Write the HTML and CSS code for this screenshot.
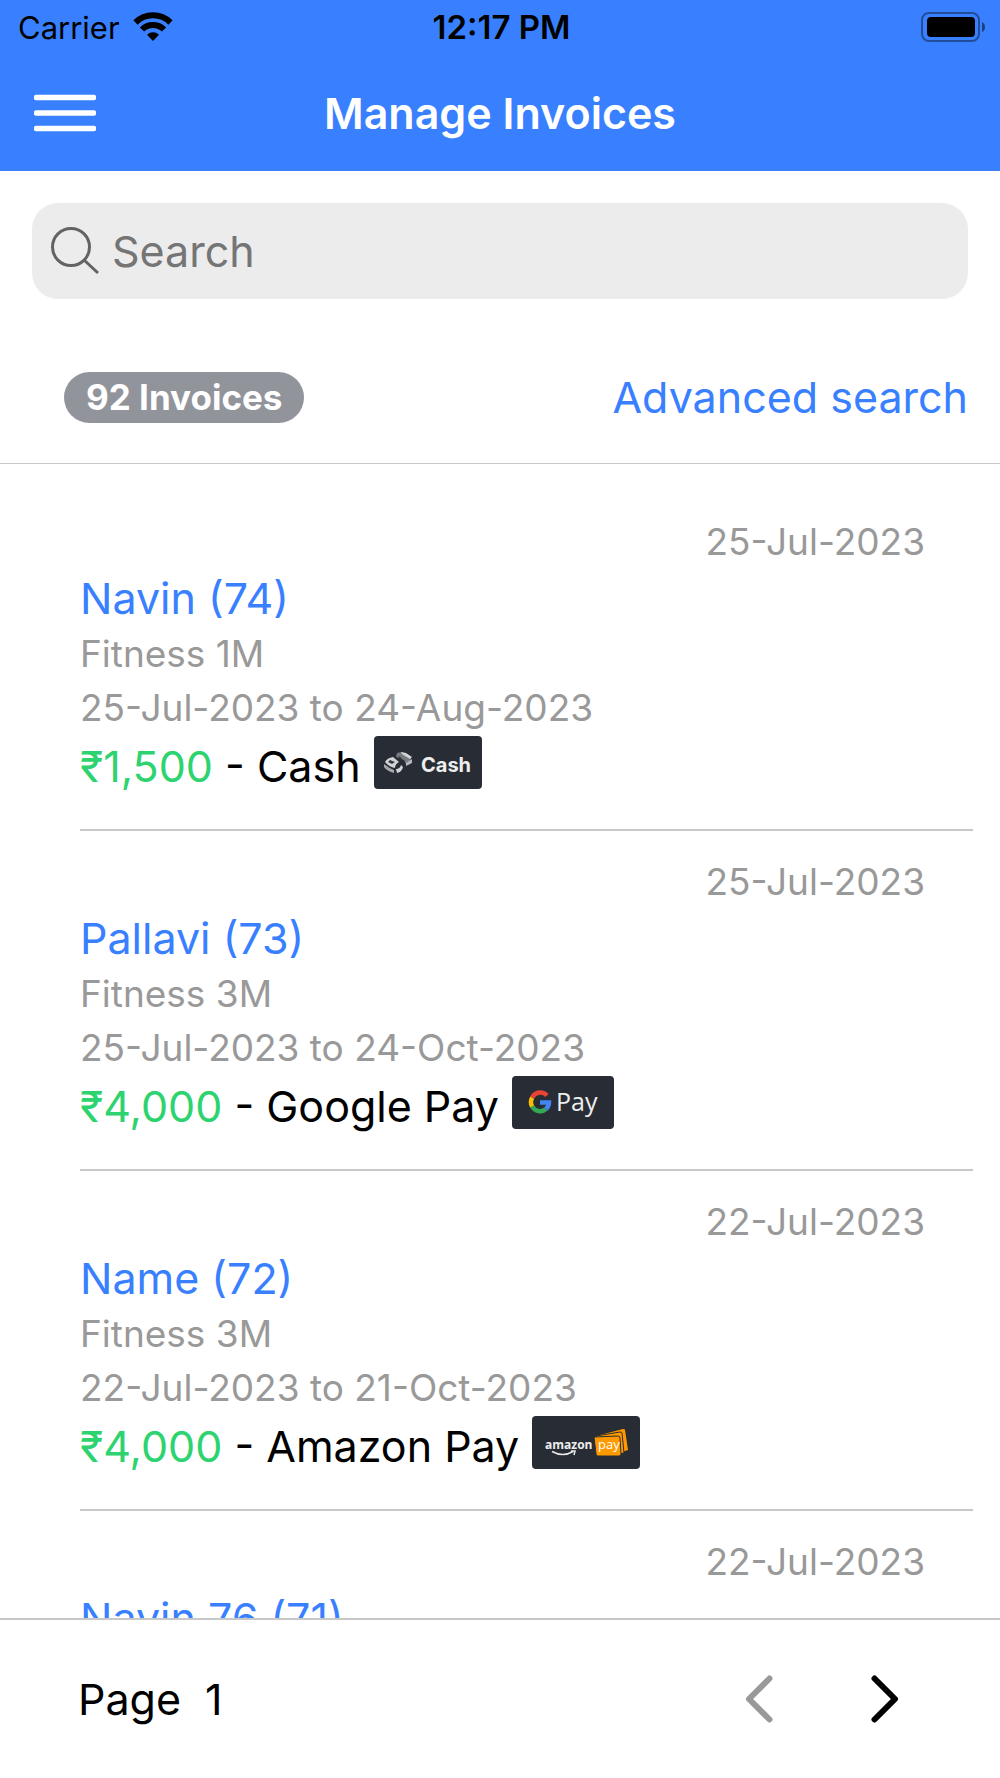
FILE: index.html
```html
<!DOCTYPE html>
<html lang="en">
<head>
<meta charset="utf-8">
<meta name="viewport" content="width=device-width, initial-scale=1">
<title>Manage Invoices</title>
<link rel="stylesheet" href="styles.css">
</head>
<body>
<header class="header">
  <div class="status">
    <div class="status-carrier">
      <span>Carrier</span>
      <svg width="40" height="30" viewBox="0 0 40 30" aria-hidden="true">
        <g fill="none" stroke="#000" stroke-width="6">
          <path d="M2.5 10.5A25 25 0 0 1 37.5 10.5"/>
          <path d="M9 17.5A15.5 15.5 0 0 1 31 17.5"/>
        </g>
        <path d="M20 29l-6-6.200A8.500 8.500 0 0 1 26 22.800z" fill="#000"/>
      </svg>
    </div>
    <span class="status-time">12:17 PM</span>
    <svg class="status-battery" width="64" height="30" viewBox="0 0 64 30" aria-hidden="true">
      <rect x="1" y="1" width="57" height="28" rx="7" fill="none" stroke="#000" stroke-opacity=".4" stroke-width="2"/>
      <rect x="6" y="5" width="48" height="20" rx="4"/>
      <path d="M61 10q3 1.500 3 5t-3 5z" fill-opacity=".5"/>
    </svg>
  </div>
  <nav class="toolbar">
    <button class="icon-button" type="button" aria-label="Menu">
      <svg width="62" height="38" viewBox="0 0 62 38" aria-hidden="true">
        <path d="M2.500 3.500h57M2.500 19h57M2.500 34.500h57" fill="none" stroke="#fff" stroke-width="5.500" stroke-linecap="round"/>
      </svg>
    </button>
    <h1 class="title">Manage Invoices</h1>
  </nav>
</header>

<section class="filters">
  <label class="search">
    <svg width="48" height="48" viewBox="0 0 48 48" aria-hidden="true">
      <g fill="none" stroke="#636363" stroke-width="3">
        <circle cx="20" cy="20" r="18.500"/>
        <path d="M33 33L47 46"/>
      </g>
    </svg>
    <input class="search-input" type="search" placeholder="Search" aria-label="Search">
  </label>
  <div class="summary">
    <span class="chip">92 Invoices</span>
    <a class="link" href="#advanced">Advanced search</a>
  </div>
</section>

<main class="list">
  <article class="invoice">
    <time class="date">25-Jul-2023</time>
    <a class="name" href="#74">Navin (74)</a>
    <p class="detail">Fitness 1M</p>
    <p class="detail">25-Jul-2023 to 24-Aug-2023</p>
    <p class="payment"><span><span class="amount">₹1,500</span> - Cash</span>
      <svg class="badge" width="108" height="53" viewBox="0 0 108 53" aria-hidden="true">
        <rect width="108" height="53" rx="4" fill="#282d35"/>
        <g fill="#d4d5d7">
          <path d="M11 26q2-4 8-5l6 5q-4 2-4 6-6-1-10-6z"/>
          <path d="M10 28q5 4 10 6v3q-7-2-10-6z" fill="#a5a7aa"/>
          <path d="M22 33q4 0 5-4l2 2q-1 5-6 6z"/>
          <path d="M23 17l5-1 9 6-1 3-4 3-2-4-8-3z" fill="#777b80"/>
          <path d="M27 16l5 1 6 4-2 2-8-5z"/>
          <path d="M32 27l6-4v4l-6 3z" fill="#b5b7ba"/>
          <path d="M16 24l5 2-3 2-4-2zM24 20l4 2-2 2z" fill="#33383f"/>
        </g>
        <text x="47" y="36" class="badge-cash">Cash</text>
      </svg>
    </p>
  </article>
  <article class="invoice">
    <time class="date">25-Jul-2023</time>
    <a class="name" href="#73">Pallavi (73)</a>
    <p class="detail">Fitness 3M</p>
    <p class="detail">25-Jul-2023 to 24-Oct-2023</p>
    <p class="payment"><span><span class="amount">₹4,000</span> - Google Pay</span>
      <svg class="badge" width="102" height="53" viewBox="0 0 102 53" aria-hidden="true">
        <rect width="102" height="53" rx="4" fill="#282d35"/>
        <g fill="none" stroke-width="4.500">
          <path d="M35 19.500A9 9 0 0 0 20.200 21.500" stroke="#ea4335"/>
          <path d="M20.200 21.500A9 9 0 0 0 20.200 30.500" stroke="#fbbc04"/>
          <path d="M20.200 30.500A9 9 0 0 0 34 33" stroke="#34a853"/>
          <path d="M34 33A9 9 0 0 0 37 26.500H28" stroke="#4285f4"/>
        </g>
        <text x="44" y="35" class="badge-gpay">Pay</text>
      </svg>
    </p>
  </article>
  <article class="invoice">
    <time class="date">22-Jul-2023</time>
    <a class="name" href="#72">Name (72)</a>
    <p class="detail">Fitness 3M</p>
    <p class="detail">22-Jul-2023 to 21-Oct-2023</p>
    <p class="payment"><span><span class="amount">₹4,000</span> - Amazon Pay</span>
      <svg class="badge" width="108" height="53" viewBox="0 0 108 53" aria-hidden="true">
        <rect width="108" height="53" rx="4" fill="#282d35"/>
        <path d="M68 19L91 13q2 0 2 1l3 20-6 2z" fill="#ff9900"/>
        <path d="M64 20L88 16q2 0 2 1l2 20-6 1z" fill="#ff9900" stroke="#282d35"/>
        <path d="M62 21l24-1q2 0 2 2l1 16q0 2-2 2H66q-2 0-2-2z" fill="#ff9900" stroke="#282d35"/>
        <text x="13" y="33" class="badge-amazon">amazon</text>
        <text x="66" y="33" class="badge-amazonpay">pay</text>
        <path d="M20 35.500q11 6 21 0M39 35h4l-1 4" fill="none" stroke="#e8e8e8" stroke-width="1.500"/>
      </svg>
    </p>
  </article>
  <article class="invoice">
    <time class="date">22-Jul-2023</time>
    <a class="name" href="#71">Navin 76 (71)</a>
  </article>
</main>

<footer class="pager">
  <p class="page"><span>Page</span><span>1</span></p>
  <div class="pager-buttons">
    <button class="icon-button" type="button" aria-label="Previous page" disabled>
      <svg width="28" height="48" viewBox="0 0 28 48" aria-hidden="true">
        <path d="M24.500 3.500L4 24l20.500 20.500" fill="none" stroke="#999" stroke-width="6" stroke-linecap="round" stroke-linejoin="round"/>
      </svg>
    </button>
    <button class="icon-button" type="button" aria-label="Next page">
      <svg width="28" height="48" viewBox="0 0 28 48" aria-hidden="true">
        <path d="M3.500 3.500L24 24 3.500 44.500" fill="none" stroke="#000" stroke-width="6" stroke-linecap="round" stroke-linejoin="round"/>
      </svg>
    </button>
  </div>
</footer>
</body>
</html>
```
FILE: styles.css
```css
* {
  box-sizing: border-box;
}

body {
  margin: 0;
  height: 100vh;
  display: flex;
  flex-direction: column;
  font-family: Inter, Roboto, sans-serif;
  font-size: 43px;
  color: #000;
  background: #fff;
}

h1,
p {
  margin: 0;
}

a {
  color: #3880ff;
  text-decoration: none;
}

svg {
  display: block;
  flex: none;
}

.icon-button {
  padding: 0;
  border: 0;
  background: none;
}

.header {
  flex: none;
  background: #3880ff;
}

.status,
.toolbar {
  display: grid;
  grid-template-columns: 1fr auto 1fr;
  align-items: center;
}

.status {
  height: 54px;
  padding: 0 15px 0 18px;
}

.status-carrier {
  display: flex;
  align-items: center;
  gap: 13px;
  font-size: 31px;
}

.status-time {
  font-size: 33px;
  font-weight: 600;
}

.status-battery {
  justify-self: end;
}

.toolbar {
  height: 117px;
  padding: 0 34px;
}

.title {
  font-size: 43px;
  font-weight: 600;
  color: #fff;
}

.filters {
  flex: none;
  padding: 32px 32px 0;
  border-bottom: 1px solid #c8c8cc;
}

.search {
  display: flex;
  align-items: center;
  gap: 13px;
  height: 96px;
  padding: 0 19px;
  border-radius: 26px;
  background: #ececec;
}

.search-input {
  flex: 1;
  min-width: 0;
  padding: 0;
  border: 0;
  outline: 0;
  background: none;
  font: inherit;
  color: #000;
}

.search-input::placeholder {
  color: #757575;
  opacity: 1;
}

.summary {
  display: flex;
  align-items: center;
  justify-content: space-between;
  height: 164px;
  padding: 32px 0 0 32px;
}

.chip {
  padding: 0 22px;
  border-radius: 26px;
  background: #92949c;
  color: #fff;
  font-size: 35px;
  font-weight: 700;
  line-height: 51px;
}

.list {
  flex: 1;
  min-height: 0;
  overflow: hidden;
  padding: 27px 27px 0 80px;
}

.invoice {
  display: flex;
  flex-direction: column;
  padding: 24px 0 32px;
  border-bottom: 2px solid #c8c7cc;
}

.date,
.detail {
  font-size: 37px;
  line-height: 54px;
  color: #999;
}

.date {
  align-self: flex-end;
  padding-right: 48px;
}

.name {
  line-height: 58px;
}

.payment {
  display: flex;
  gap: 13px;
  line-height: 62px;
}

.amount {
  color: #2dd36f;
}

.badge {
  margin-top: 1px;
}

.badge-cash {
  font: 700 20px Inter, sans-serif;
  fill: #eee;
}

.badge-gpay {
  font: 500 25px "Open Sans", sans-serif;
  fill: #eee;
}

.badge-amazon {
  font: 700 12px "Open Sans", sans-serif;
  fill: #eee;
}

.badge-amazonpay {
  font: 400 13px "Open Sans", sans-serif;
  fill: #fff;
}

.pager {
  flex: none;
  display: flex;
  align-items: center;
  justify-content: space-between;
  height: 160px;
  padding: 0 101px 0 78px;
  border-top: 2px solid #c8c8c8;
}

.page {
  display: flex;
  gap: 24px;
}

.pager-buttons {
  display: flex;
  gap: 98px;
}
```
